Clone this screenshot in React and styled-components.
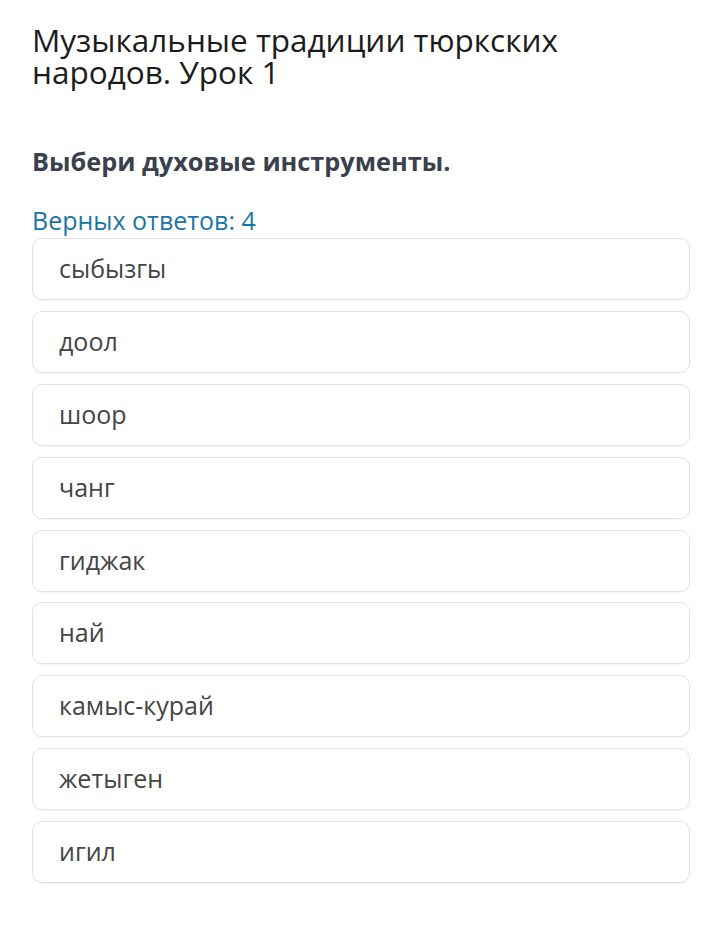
import React from "react";
import styled, { createGlobalStyle } from "styled-components";

const GlobalStyle = createGlobalStyle`
  html, body {
    margin: 0;
    padding: 0;
    background: #ffffff;
    font-family: "Open Sans", "Noto Sans", sans-serif;
  }
`;

const Page = styled.div`
  padding: 24px 30px 40px 32px;
`;

const Title = styled.h1`
  margin: 0;
  font-size: 31.5px;
  line-height: 32px;
  font-weight: 400;
  color: #1c1c1c;
  max-width: 600px;
`;

const Question = styled.h2`
  margin: 58px 0 0 0;
  font-size: 25.3px;
  line-height: 30px;
  font-weight: 700;
  color: #3a414d;
`;

const Hint = styled.div`
  margin-top: 29px;
  font-size: 25px;
  line-height: 30px;
  color: #1b74a6;
`;

const Options = styled.div`
  display: flex;
  flex-direction: column;
  gap: 10.9px;
  margin-top: 3px;
`;

const Option = styled.div`
  box-sizing: border-box;
  height: 62px;
  display: flex;
  align-items: center;
  padding: 0 26px 2px;
  border: 1px solid #e2e2e2;
  border-radius: 10px;
  box-shadow: 0 1px 1px rgba(0, 0, 0, 0.04);
  font-size: 25px;
  color: #454545;
`;

const items = [
  "сыбызгы",
  "доол",
  "шоор",
  "чанг",
  "гиджак",
  "най",
  "камыс-курай",
  "жетыген",
  "игил",
];

export default function App() {
  return (
    <>
      <GlobalStyle />
      <Page>
        <Title>Музыкальные традиции тюркских народов. Урок 1</Title>
        <Question>Выбери духовые инструменты.</Question>
        <Hint>Верных ответов: 4</Hint>
        <Options>
          {items.map((t) => (
            <Option key={t}>{t}</Option>
          ))}
        </Options>
      </Page>
    </>
  );
}
